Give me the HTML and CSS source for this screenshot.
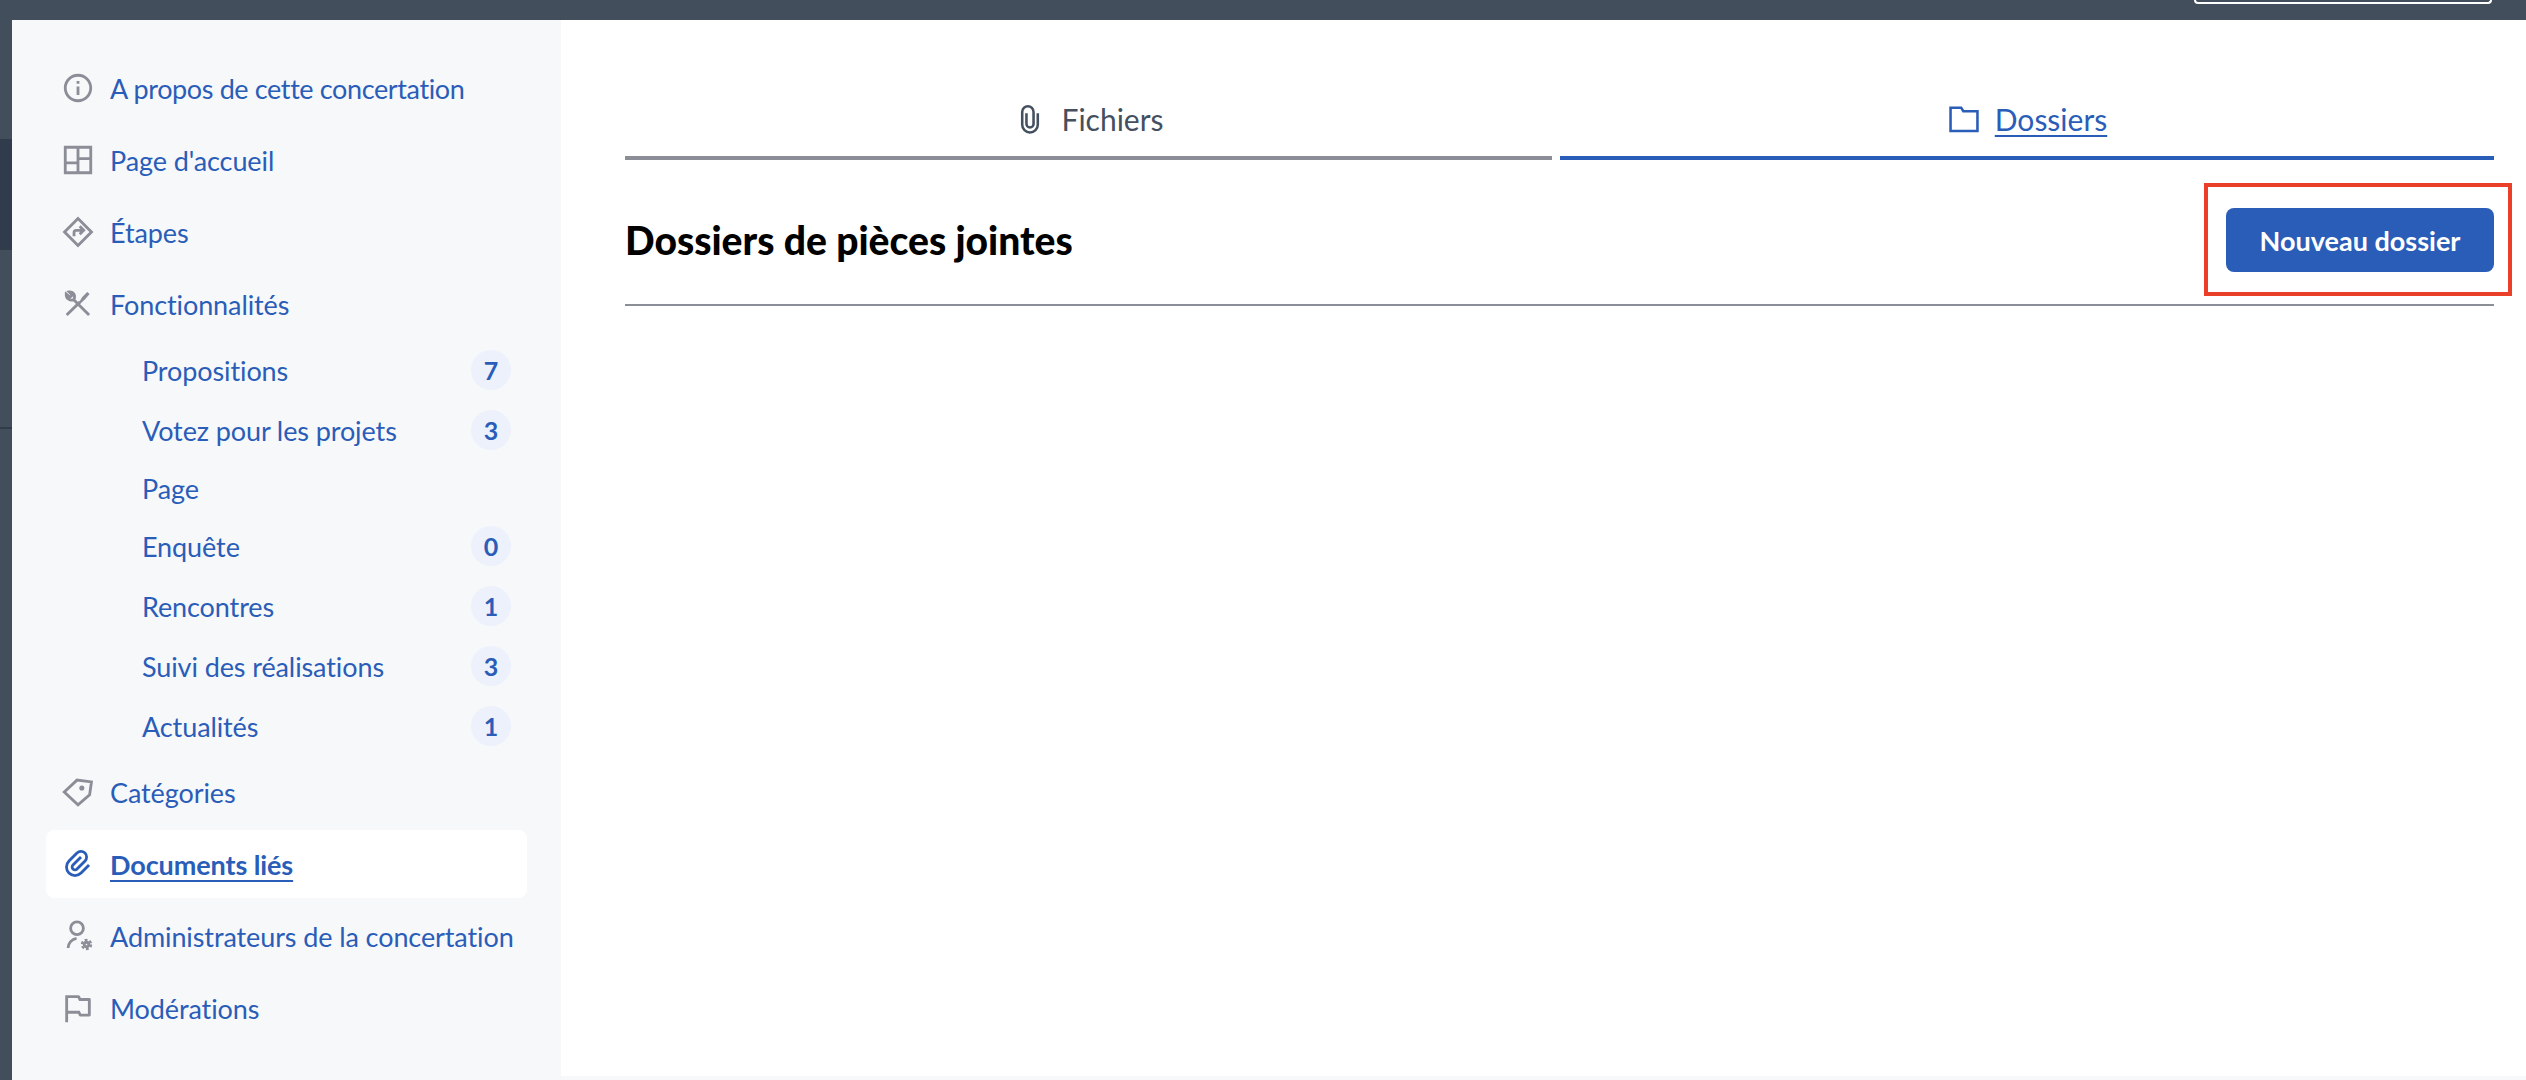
FILE: index.html
```html
<!DOCTYPE html>
<html lang="fr">
<head>
  <meta charset="UTF-8" />
  <title>Documents liés</title>
  <link rel="stylesheet" href="styles.css">
</head>
<body>
  <div class="backdrop-block"></div>
  <div class="backdrop-line"></div>

  <div class="topbar"><div class="topbar-btn"></div></div>

  <div class="layout">
    <nav class="sidebar">
      <a class="nav-item">
        <svg class="icon" viewBox="0 0 24 24"><path d="M12 22C6.477 22 2 17.523 2 12S6.477 2 12 2s10 4.477 10 10-4.477 10-10 10zm0-2a8 8 0 1 0 0-16 8 8 0 0 0 0 16zM11 7h2v2h-2V7zm0 4h2v6h-2v-6z"/></svg>
        <span class="nav-text-tight">A propos de cette concertation</span>
      </a>
      <a class="nav-item">
        <svg class="icon icon-line" viewBox="0 0 24 24"><path d="M3 3h18v18H3zM12 3v18M3 14h9M12 11h9"/></svg>
        <span>Page d'accueil</span>
      </a>
      <a class="nav-item">
        <svg class="icon icon-line" viewBox="0 0 24 24"><path d="M12 2.500 21.500 12 12 21.500 2.500 12zM9.200 15v-2.700a1.500 1.500 0 0 1 1.500-1.500h5M13.200 8l2.800 2.800-2.800 2.800"/></svg>
        <span>Étapes</span>
      </a>
      <a class="nav-item">
        <svg class="icon icon-line" viewBox="0 0 24 24"><path d="M4 19.800 13.500 10.500M19.800 19.800 9 9M9 9C6.500 10 3.500 8.300 3.700 5L6.300 7.200 8 5.700 5.800 3.500C8.800 3 10.500 6 9 9z"/><path class="icon-tip" d="M12.800 10.800 15 7 18.500 3.600 20.200 5 17 8.700 13.800 11.700z"/></svg>
        <span>Fonctionnalités</span>
      </a>

      <div class="sub-list">
        <a class="sub-item"><span>Propositions</span><span class="count">7</span></a>
        <a class="sub-item"><span>Votez pour les projets</span><span class="count">3</span></a>
        <a class="sub-item sub-item-plain"><span>Page</span></a>
        <a class="sub-item"><span>Enquête</span><span class="count">0</span></a>
        <a class="sub-item"><span>Rencontres</span><span class="count">1</span></a>
        <a class="sub-item"><span>Suivi des réalisations</span><span class="count">3</span></a>
        <a class="sub-item"><span>Actualités</span><span class="count">1</span></a>
      </div>

      <a class="nav-item">
        <svg class="icon icon-line" viewBox="0 0 24 24"><path d="M2.300 12 11.300 3.600l10.200 1.300-1.300 9.100-8.200 7z"/><circle class="icon-dot" cx="14.700" cy="9.200" r="1.800"/></svg>
        <span>Catégories</span>
      </a>
      <a class="nav-item active">
        <svg class="icon icon-blue" viewBox="0 0 24 24"><path d="M14.828 7.757l-5.656 5.657a1 1 0 1 0 1.414 1.414l5.657-5.656A3 3 0 1 0 12 4.929l-5.657 5.657a5 5 0 1 0 7.071 7.07L19.071 12l1.414 1.414-5.657 5.657a7 7 0 1 1-9.900-9.900l5.658-5.656a5 5 0 0 1 7.070 7.070L12 16.244A3 3 0 1 1 7.757 12l5.657-5.657 1.414 1.414z"/></svg>
        <span>Documents liés</span>
      </a>
      <a class="nav-item">
        <svg class="icon icon-line" viewBox="0 0 24 24"><circle cx="11.300" cy="6.500" r="4.500"/><path d="M5 20.500a7 7 0 0 1 6-6.800"/><circle cx="18" cy="18" r="1.600"/><circle class="icon-gear-teeth" cx="18" cy="18" r="3.300"/></svg>
        <span>Administrateurs de la concertation</span>
      </a>
      <a class="nav-item">
        <svg class="icon" viewBox="0 0 24 24"><path d="M5 16v6H3V3h9.382a1 1 0 0 1 .894.553L14 5h6a1 1 0 0 1 1 1v11a1 1 0 0 1-1 1h-6.382a1 1 0 0 1-.894-.553L12 16H5zM5 5v9h8.236l1 2H19V7h-6.236l-1-2H5z"/></svg>
        <span>Modérations</span>
      </a>
    </nav>

    <main class="content">
      <div class="tabs">
        <a class="tab">
          <svg class="tab-icon" viewBox="0 0 24 24"><path d="M17.500 8v8a5.500 5.500 0 0 1-11 0V7a4 4 0 0 1 8 0v8.500a2.500 2.500 0 0 1-5 0V8"/></svg>
          <span>Fichiers</span>
        </a>
        <a class="tab tab-active">
          <svg class="tab-icon" viewBox="0 0 24 24"><path d="M2.500 4h7.500l1.500 2.500h10v14h-19z"/></svg>
          <span class="tab-label">Dossiers</span>
        </a>
      </div>

      <div class="section-head">
        <h1>Dossiers de pièces jointes</h1>
        <button class="btn-primary" type="button">Nouveau dossier<span class="highlight"></span></button>
      </div>
    </main>
  </div>

  <div class="footer-strip"></div>
</body>
</html>
```

FILE: styles.css
```css
* {
  box-sizing: border-box;
}

body {
  margin: 0;
  height: 1080px;
  overflow: hidden;
  background: #424e5c;
  font-family: "Lato", "Noto Sans", sans-serif;
  font-size: 27px;
  color: #2a5db8;
  position: relative;
}

.backdrop-block {
  position: absolute;
  left: 0;
  top: 139px;
  width: 12px;
  height: 111px;
  background: #303b4b;
}

.backdrop-line {
  position: absolute;
  left: 0;
  top: 427px;
  width: 12px;
  height: 2px;
  background: #303b4b;
}

.topbar {
  height: 20px;
  display: flex;
  justify-content: flex-end;
  padding-right: 34px;
}

.topbar-btn {
  width: 298px;
  height: 4px;
  border: 2px solid #fff;
  border-top: none;
  border-radius: 0 0 6px 6px;
}

.layout {
  display: flex;
  height: 1056px;
  margin-left: 12px;
}

.sidebar {
  width: 549px;
  flex-shrink: 0;
  display: flex;
  flex-direction: column;
  background: #f7f8fa;
  padding: 32px 34px 0;
}

.nav-item {
  display: flex;
  align-items: center;
  gap: 15px;
  height: 68px;
  flex-shrink: 0;
  margin: 2px 0;
  padding-left: 15px;
  border-radius: 8px;
  white-space: nowrap;
  letter-spacing: -0.1px;
}

.nav-text-tight {
  letter-spacing: -0.38px;
}

.nav-item.active {
  background: #fff;
  font-weight: 700;
}

.nav-item.active span {
  text-decoration: underline;
  text-decoration-thickness: 2px;
  text-underline-offset: 5px;
}

.icon {
  width: 34px;
  height: 34px;
  flex-shrink: 0;
  fill: #8b8e97;
}

.icon-line {
  fill: none;
  stroke: #8b8e97;
  stroke-width: 2;
}

.icon-tip,
.icon-dot {
  fill: #8b8e97;
  stroke: none;
}

.icon-gear-teeth {
  stroke-width: 1.500;
  stroke-dasharray: 2 1.460;
}

.icon-blue {
  fill: #2a5db8;
}

.sub-item {
  display: flex;
  align-items: center;
  justify-content: space-between;
  height: 60px;
  padding-left: 96px;
  letter-spacing: -0.1px;
}

.sub-item-plain {
  height: 56px;
}

.count {
  width: 40px;
  height: 40px;
  margin-right: 16px;
  display: flex;
  align-items: center;
  justify-content: center;
  border-radius: 50%;
  background: #edf1fb;
  font-size: 25px;
  font-weight: 700;
}

.content {
  flex: 1;
  background: #fff;
  padding: 60px 32px 0 64px;
}

.tabs {
  display: grid;
  grid-template-columns: 927px 934px;
  gap: 8px;
}

.tab {
  display: flex;
  align-items: center;
  justify-content: center;
  gap: 14px;
  height: 80px;
  padding-top: 2px;
  border-bottom: 4px solid #8b8e97;
  color: #44505f;
  font-size: 30px;
}

.tab-icon {
  width: 34px;
  height: 34px;
  fill: none;
  stroke: currentColor;
  stroke-width: 1.800;
}

.tab-active {
  border-bottom-color: #2a5db8;
  color: #2a5db8;
}

.tab-label {
  text-decoration: underline;
  text-decoration-thickness: 2px;
  text-underline-offset: 4px;
}

.section-head {
  display: flex;
  align-items: center;
  justify-content: space-between;
  padding: 48px 0 32px;
  border-bottom: 2px solid #8b8e97;
}

h1 {
  margin: 0;
  font-size: 39px;
  font-weight: 900;
  color: #000;
}

.btn-primary {
  position: relative;
  width: 268px;
  height: 64px;
  padding: 0;
  border: none;
  border-radius: 8px;
  background: #2a5db8;
  color: #fff;
  font-family: inherit;
  font-size: 27px;
  font-weight: 700;
}

.highlight {
  position: absolute;
  left: -22px;
  right: -18px;
  top: -25px;
  bottom: -24px;
  border: 4px solid #ea3f28;
}

.footer-strip {
  height: 4px;
  margin-left: 12px;
  background: #f7f8fa;
}
```
